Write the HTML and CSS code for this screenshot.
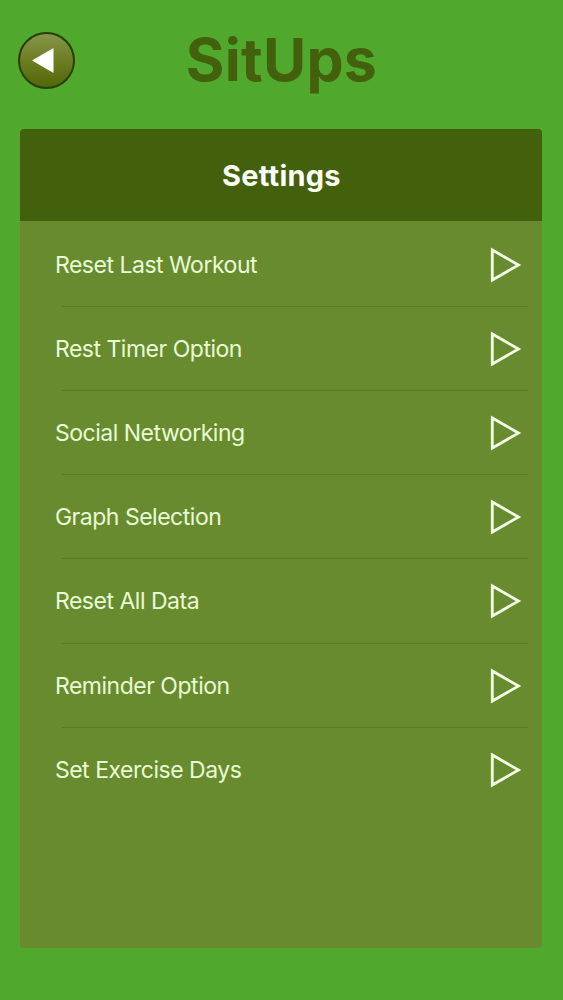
FILE: index.html
```html
<!DOCTYPE html>
<html lang="en">
<head>
  <meta charset="UTF-8" />
  <meta name="viewport" content="width=device-width, initial-scale=1.0"/>
  <title>SitUps</title>
  <link rel="stylesheet" href="styles.css">
</head>
<body>

  <header class="top-bar">
    <button class="back-btn" aria-label="Back">
      <svg width="22" height="25" viewBox="0 0 22 25"><path d="M0 12.5 L21.5 0 V25 Z" fill="#fff"/></svg>
    </button>
    <h1>SitUps</h1>
  </header>

  <main class="panel">
    <h2>Settings</h2>
    <ul id="menu" class="menu"></ul>
  </main>

  <script>
    const options = [
      "Reset Last Workout",
      "Rest Timer Option",
      "Social Networking",
      "Graph Selection",
      "Reset All Data",
      "Reminder Option",
      "Set Exercise Days"
    ];

    const menu = document.getElementById("menu");

    options.forEach(name => {
      const item = document.createElement("li");
      item.innerHTML = `
        <span class="label">${name}</span>
        <svg class="arrow" width="32" height="36" viewBox="0 0 32 36">
          <path d="M2.3 3 V33 L28.5 18 Z" fill="none" stroke="#f4ffe8" stroke-width="2.8"/>
        </svg>`;
      menu.appendChild(item);
    });
  </script>

</body>
</html>
```
FILE: styles.css
```css
:root {
  --green: #50a82c;
  --dark: #43600c;
  --panel: #688b30;
}

* {
  box-sizing: border-box;
}

body {
  margin: 0;
  height: 1000px;
  background: var(--green);
  font-family: Inter, "Liberation Sans", sans-serif;
}

.top-bar {
  display: grid;
  grid-template-columns: 57px 1fr 57px;
  align-items: center;
  height: 129px;
  padding: 0 18px 8px;
}

.back-btn {
  display: flex;
  align-items: center;
  justify-content: center;
  width: 57px;
  height: 57px;
  padding: 0 7px 0 0;
  border: 2px solid #26400a;
  border-radius: 50%;
  background: linear-gradient(#87954a, #6d7d22 50%, #51680a);
}

h1 {
  margin: 0;
  padding-bottom: 1px;
  text-align: center;
  font-size: 59px;
  font-weight: 700;
  line-height: 72px;
  letter-spacing: 0.3px;
  color: var(--dark);
}

.panel {
  width: 522px;
  height: 819px;
  margin: 0 0 0 20.4px;
  overflow: hidden;
  border-radius: 4px;
  background: var(--panel);
}

h2 {
  height: 92px;
  margin: 0;
  padding-top: 1px;
  text-align: center;
  font-size: 29px;
  font-weight: 700;
  line-height: 92px;
  letter-spacing: 0.2px;
  color: #fbfff4;
  background: var(--dark);
}

.menu {
  margin: 0;
  padding: 1.6px 14px 0 34.5px;
  list-style: none;
}

.menu li {
  display: flex;
  align-items: center;
  justify-content: space-between;
  height: 84.2px;
  padding-right: 6.6px;
  font-size: 23px;
  letter-spacing: -0.48px;
  color: #e8fbd4;
}

/* separator starts a bit to the right of the label */
.menu li:not(:last-child) {
  background: linear-gradient(#577b21, #577b21) 7px 100% / 100% 1px no-repeat;
}
```
